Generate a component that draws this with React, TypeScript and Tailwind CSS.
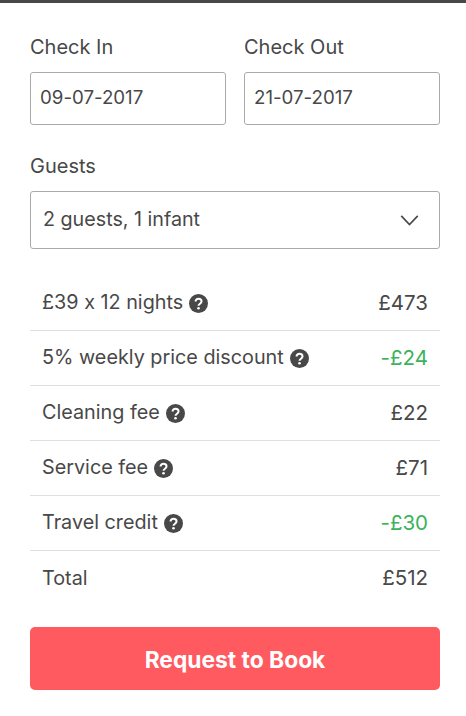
import type { ReactNode } from 'react'

const rows = [
  { label: '£39 x 12 nights', value: '£473', help: true },
  { label: '5% weekly price discount', value: '-£24', help: true, green: true },
  { label: 'Cleaning fee', value: '£22', help: true },
  { label: 'Service fee', value: '£71', help: true },
  { label: 'Travel credit', value: '-£30', help: true, green: true },
  { label: 'Total', value: '£512' },
]

function HelpIcon() {
  return (
    <svg viewBox="0 0 20 20" className="ml-[6px] h-[19px] w-[19px] shrink-0">
      <circle cx="10" cy="10" r="10" fill="#484848" />
      <path d="M6.9 7.8C6.9 6 8.2 4.9 10 4.9c1.9 0 3.200 1.100 3.200 2.800 0 2.500-3.200 2.500-3.200 4.700" fill="none" stroke="#fff" strokeWidth="2.100" />
      <circle cx="10" cy="15" r="1.400" fill="#fff" />
    </svg>
  )
}

function Field({ label, children }: { label: string; children: ReactNode }) {
  return (
    <div className="min-w-0 flex-1">
      <div className="mb-[13px] h-[24px] text-[20px] leading-[24px]">{label}</div>
      {children}
    </div>
  )
}

export default function App() {
  return (
    <div className="h-[716px] w-[466px] overflow-hidden border-t-[3px] border-[#484848] bg-white font-['Inter','Liberation_Sans',sans-serif] text-[#484848] [font-feature-settings:'calt'_0]">
      <div className="pt-[32px] pr-[26px] pl-[30px]">
        <div className="flex gap-[18px]">
          <Field label="Check In">
            <div className="flex h-[53px] items-center rounded-[3px] border border-[#aaaaaa] pl-[9px] text-[18.700px]">09-07-2017</div>
          </Field>
          <Field label="Check Out">
            <div className="flex h-[53px] items-center rounded-[3px] border border-[#aaaaaa] pl-[9px] text-[18.700px]">21-07-2017</div>
          </Field>
        </div>

        <div className="mt-[29px] mb-[13px] h-[24px] text-[20px] leading-[24px]">Guests</div>
        <div className="flex h-[58px] items-center justify-between rounded-[3px] border border-[#aaaaaa] pr-[20px] pl-[12px] text-[19.700px]">
          <span>2 guests, 1 infant</span>
          <svg viewBox="0 0 20 12" className="h-[11px] w-[19px]" fill="none" stroke="#484848" strokeWidth="1.800">
            <path d="M1 1l9 9.500L19 1" />
          </svg>
        </div>

        <div className="mt-[27px]">
          {rows.map((row, i) => (
            <div key={row.label} className={`flex h-[55px] items-center justify-between px-[12px] text-[19.800px] ${i < rows.length - 1 ? 'border-b border-[#dfdfdf]' : ''}`}>
              <span className="flex items-center">
                {row.label}
                {row.help && <HelpIcon />}
              </span>
              <span className={`text-[20.500px] ${row.green ? 'text-[#3bb35b]' : ''}`}>{row.value}</span>
            </div>
          ))}
        </div>

        <button className="mt-[21px] flex h-[63px] w-full items-center justify-center rounded-[5px] bg-[#ff5a5f] pt-[3px] text-[22.800px] font-bold text-white">
          Request to Book
        </button>
      </div>
    </div>
  )
}
